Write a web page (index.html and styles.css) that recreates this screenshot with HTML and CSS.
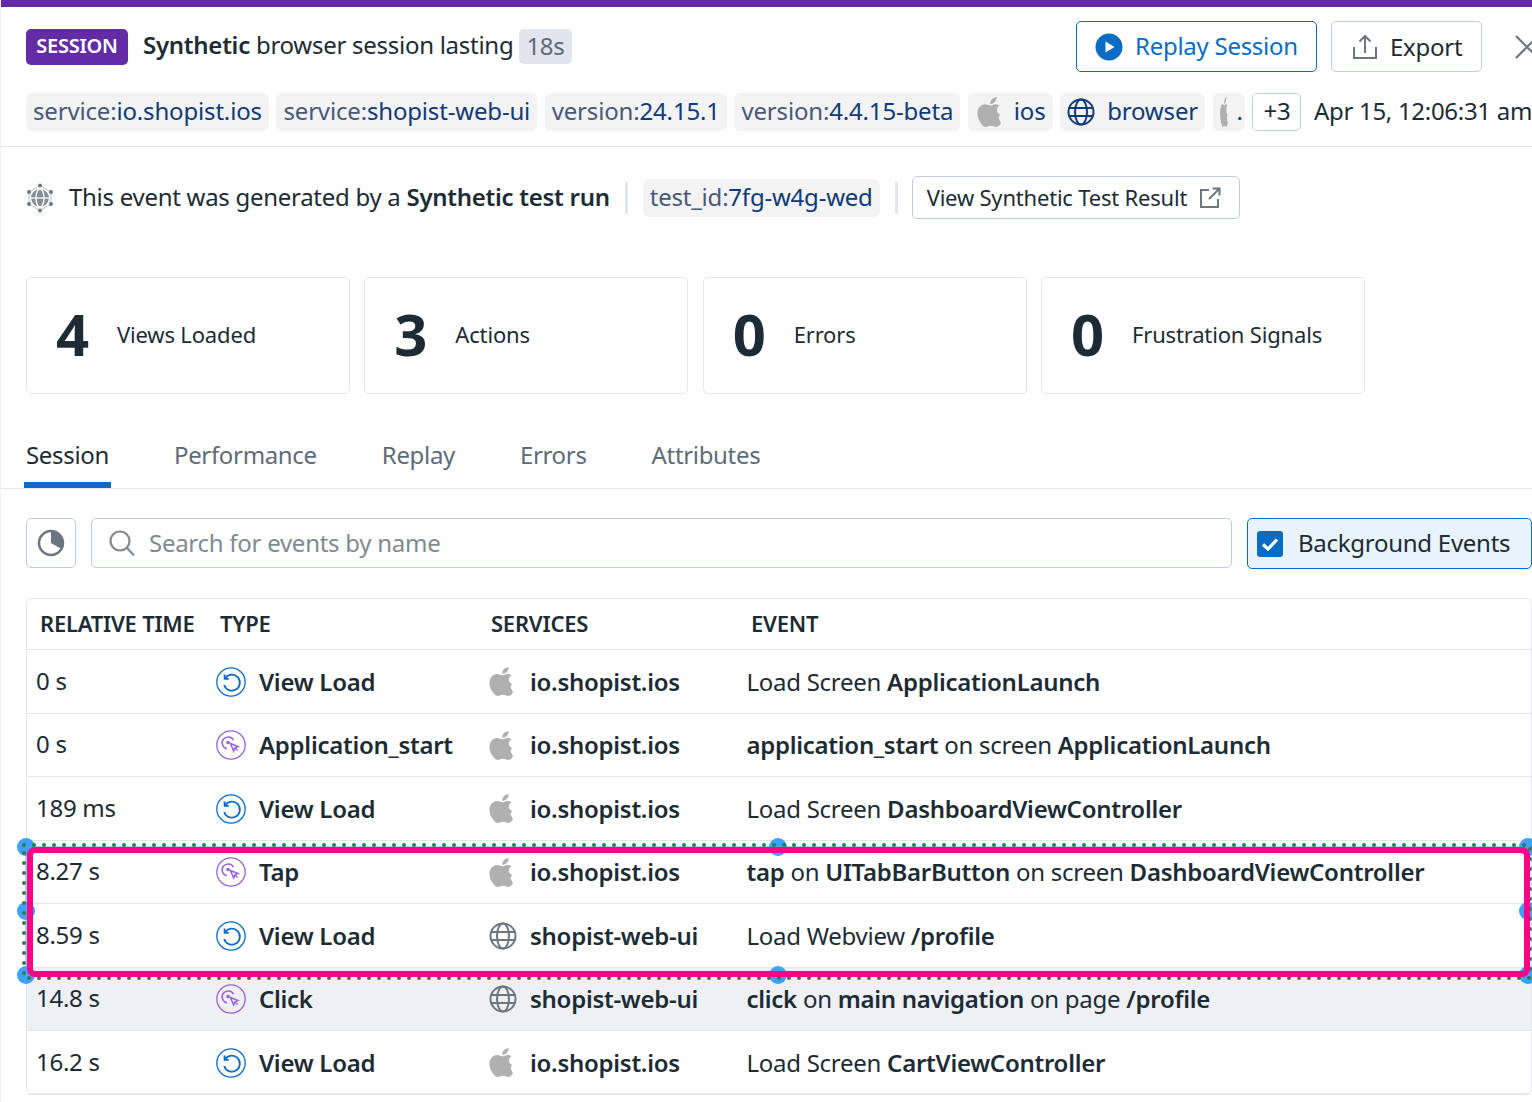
FILE: index.html
```html
<!DOCTYPE html>
<html lang="en">
<head>
    <meta charset="UTF-8" />
    <title>Session</title>
    <link rel="stylesheet" href="styles.css">
</head>
<body>
    <svg class="defs" width="0" height="0">
        <symbol id="apple" viewBox="3.600 2 15.700 20" preserveAspectRatio="none"><path fill="#b0b0b0" d="M18.710 19.500c-.83 1.240-1.710 2.450-3.050 2.470-1.340.03-1.770-.79-3.290-.79-1.530 0-2 .77-3.270.82-1.310.05-2.300-1.320-3.140-2.530C4.250 17 2.940 12.450 4.700 9.390c.87-1.520 2.430-2.480 4.120-2.510 1.280-.02 2.500.87 3.290.87.78 0 2.260-1.070 3.210-.91.4.02 1.530.16 2.360 1.020-.08.05-1.610.94-1.590 2.800.02 2.220 1.950 2.960 1.970 2.970-.02.05-.31 1.060-1.020 2.080zM13 3.500c.73-.83 1.940-1.460 2.940-1.500.13 1.170-.34 2.350-1.040 3.190-.69.85-1.830 1.510-2.950 1.420-.15-1.150.41-2.350 1.050-3.110z"/></symbol>
        <symbol id="globe" viewBox="0 0 28 28"><g fill="none" stroke="currentColor" stroke-width="2"><circle cx="14" cy="14" r="12.500"/><ellipse cx="14" cy="14" rx="6" ry="12.500"/><path d="M2.500 10h23M2.500 18h23"/></g></symbol>
        <symbol id="view" viewBox="0 0 30 30"><g fill="none" stroke="#0b6cc4"><circle cx="15" cy="15" r="14.200" stroke-width="1.300"/><path stroke-width="1.800" d="M9.200 11.200A8 8 0 1 1 8.200 18"/><path stroke-width="1.800" d="M8.600 7.600v4.200h4.200"/></g></symbol>
        <symbol id="action" viewBox="0 0 30 30"><g fill="none" stroke="#9a62d8"><circle cx="15" cy="15" r="14.200" stroke-width="1.300"/><path stroke-width="1.500" d="M17.500 10.200A6 6 0 1 0 11 18.800"/><path stroke-width="1.500" d="M14.500 13.500l7.500 3-3 1.300-1.300 3.200z"/><path stroke-width="1.500" d="M19 18l2.500 2.500"/></g><circle cx="12" cy="12.600" r="1.800" fill="#9a62d8"/></symbol>
    </svg>

    <div class="topbar"></div>

    <header class="head">
        <span class="badge">SESSION</span>
        <span class="title"><b>Synthetic</b> browser session lasting</span>
        <span class="chip">18s</span>
        <div class="actions">
            <button class="btn btn-replay">
                <svg width="28" height="28" viewBox="0 0 28 28"><circle cx="14" cy="14" r="13.500" fill="#0b6cc4"/><path d="M10.500 8.500v11l9-5.500z" fill="#fff"/></svg>
                <span class="up">Replay Session</span>
            </button>
            <button class="btn btn-export">
                <svg width="26" height="28" viewBox="0 0 26 28" fill="none" stroke="#6c7680" stroke-width="2"><path d="M2 14v11h22V14"/><path d="M13 20V3M7.500 8.500L13 3l5.500 5.500"/></svg>
                Export
            </button>
            <svg class="close" width="17" height="26" viewBox="0 0 17 26" fill="none" stroke="#6c7680" stroke-width="2.200"><path d="M1 2l22 22M23 2L1 24"/></svg>
        </div>
    </header>

    <div class="tags">
        <span class="tag">service:<em>io.shopist.ios</em></span>
        <span class="tag">service:<em>shopist-web-ui</em></span>
        <span class="tag">version:<em>24.15.1</em></span>
        <span class="tag">version:<em>4.4.15-beta</em></span>
        <span class="tag tag-apple"><svg width="25" height="30"><use href="#apple"/></svg><em>ios</em></span>
        <span class="tag tag-icon"><svg class="navy" width="28" height="28"><use href="#globe"/></svg><em>browser</em></span>
        <span class="tag tag-cut"><svg width="8" height="30"><use href="#apple"/></svg><em>.</em></span>
        <span class="more">+3</span>
        <span class="date">Apr 15, 12:06:31 am</span>
    </div>

    <section class="synth">
        <svg class="synth-icon" width="28" height="30" viewBox="0 0 28 30">
            <path d="M14 2.500L25 9v12l-11 6.500L3 21V9z" fill="none" stroke="#c4c9ce" stroke-width="1.200"/>
            <g fill="#6c7680"><circle cx="14" cy="2.500" r="2"/><circle cx="14" cy="27.500" r="2"/><circle cx="3" cy="9" r="2"/><circle cx="25" cy="9" r="2"/><circle cx="3" cy="21" r="2"/><circle cx="25" cy="21" r="2"/></g>
            <circle cx="14" cy="15" r="9" fill="#858d94"/>
            <g fill="none" stroke="#fff" stroke-width="1.300"><ellipse cx="14" cy="15" rx="4" ry="9"/><path d="M5 15h18"/></g>
        </svg>
        <span class="synth-text">This event was generated by a <b>Synthetic test run</b></span>
        <span class="sep"></span>
        <span class="tag">test_id:<em>7fg-w4g-wed</em></span>
        <span class="sep"></span>
        <button class="btn btn-result">
            <span class="up">View Synthetic Test Result</span>
            <svg width="22" height="22" viewBox="0 0 22 22" fill="none" stroke="#6c7680" stroke-width="2"><path d="M10 3H2v17h17v-8"/><path d="M10 12L20 2M13.500 1.500H20.500V8.500"/></svg>
        </button>
    </section>

    <section class="stats">
        <div class="stat"><strong>4</strong><span>Views Loaded</span></div>
        <div class="stat"><strong>3</strong><span>Actions</span></div>
        <div class="stat"><strong>0</strong><span>Errors</span></div>
        <div class="stat"><strong>0</strong><span>Frustration Signals</span></div>
    </section>

    <nav class="tabs">
        <a class="active">Session</a>
        <a>Performance</a>
        <a>Replay</a>
        <a>Errors</a>
        <a>Attributes</a>
    </nav>

    <div class="toolbar">
        <button class="pie">
            <svg width="28" height="28" viewBox="0 0 28 28"><circle cx="14" cy="14" r="12" fill="none" stroke="#6c7680" stroke-width="2.500"/><path d="M14 14V2a12 12 0 0 1 10.400 18z" fill="#6c7680"/></svg>
        </button>
        <div class="search">
            <svg width="28" height="28" viewBox="0 0 28 28" fill="none" stroke="#7f8a91" stroke-width="2.200"><circle cx="12" cy="12" r="9.500"/><path d="M19 19l7 7.500"/></svg>
            <span>Search for events by name</span>
        </div>
        <label class="bg-events">
            <svg width="26" height="26" viewBox="0 0 26 26"><rect width="26" height="26" rx="3" fill="#0b6cc4"/><path d="M6 13.500l5 4.500 9-9.500" fill="none" stroke="#fff" stroke-width="3.200"/></svg>
            <span class="up">Background Events</span>
        </label>
    </div>

    <div class="table">
        <div class="row row-head">
            <span>RELATIVE TIME</span><span>TYPE</span><span>SERVICES</span><span>EVENT</span>
        </div>
        <div class="row">
            <span>0 s</span>
            <span class="cell"><svg width="30" height="30"><use href="#view"/></svg><b>View Load</b></span>
            <span class="cell"><svg class="apple" width="25" height="29"><use href="#apple"/></svg><b>io.shopist.ios</b></span>
            <span>Load Screen <b>ApplicationLaunch</b></span>
        </div>
        <div class="row">
            <span>0 s</span>
            <span class="cell"><svg width="30" height="30"><use href="#action"/></svg><b>Application_start</b></span>
            <span class="cell"><svg class="apple" width="25" height="29"><use href="#apple"/></svg><b>io.shopist.ios</b></span>
            <span><b>application_start</b> on screen <b>ApplicationLaunch</b></span>
        </div>
        <div class="row">
            <span>189 ms</span>
            <span class="cell"><svg width="30" height="30"><use href="#view"/></svg><b>View Load</b></span>
            <span class="cell"><svg class="apple" width="25" height="29"><use href="#apple"/></svg><b>io.shopist.ios</b></span>
            <span>Load Screen <b>DashboardViewController</b></span>
        </div>
        <div class="row">
            <span>8.27 s</span>
            <span class="cell"><svg width="30" height="30"><use href="#action"/></svg><b>Tap</b></span>
            <span class="cell"><svg class="apple" width="25" height="29"><use href="#apple"/></svg><b>io.shopist.ios</b></span>
            <span><b>tap</b> on <b>UITabBarButton</b> on screen <b>DashboardViewController</b></span>
        </div>
        <div class="row">
            <span>8.59 s</span>
            <span class="cell"><svg width="30" height="30"><use href="#view"/></svg><b>View Load</b></span>
            <span class="cell"><svg class="grey" width="28" height="28"><use href="#globe"/></svg><b>shopist-web-ui</b></span>
            <span>Load Webview <b>/profile</b></span>
        </div>
        <div class="row row-hover">
            <span>14.8 s</span>
            <span class="cell"><svg width="30" height="30"><use href="#action"/></svg><b>Click</b></span>
            <span class="cell"><svg class="grey" width="28" height="28"><use href="#globe"/></svg><b>shopist-web-ui</b></span>
            <span><b>click</b> on <b>main navigation</b> on page <b>/profile</b></span>
        </div>
        <div class="row">
            <span>16.2 s</span>
            <span class="cell"><svg width="30" height="30"><use href="#view"/></svg><b>View Load</b></span>
            <span class="cell"><svg class="apple" width="25" height="29"><use href="#apple"/></svg><b>io.shopist.ios</b></span>
            <span>Load Screen <b>CartViewController</b></span>
        </div>

        <!-- annotation drawn over rows 4 and 5 -->
        <div class="selection">
            <i class="handle h-tl"></i><i class="handle h-tm"></i><i class="handle h-tr"></i>
            <i class="handle h-ml"></i><i class="handle h-mr"></i>
            <i class="handle h-bl"></i><i class="handle h-bm"></i><i class="handle h-br"></i>
            <svg class="dots" width="1506" height="133"><rect x="2" y="2" width="1503" height="129" fill="none" stroke="#4da6f5" stroke-width="1"/><rect x="0" y="0" width="1506" height="133" fill="none" stroke="#2f7d45" stroke-width="4" stroke-linecap="round" stroke-dasharray="0 10"/></svg>
            <div class="pink"></div>
        </div>
    </div>
</body>
</html>
```

FILE: styles.css
```css
* {
    box-sizing: border-box;
}

html, body {
    height: 1102px;
    overflow: hidden;
}

body {
    margin: 0;
    width: 1532px;
    background: #fff;
    color: #1c2b34;
    font-family: "Noto Sans", Arial, sans-serif;
    font-size: 24px;
    line-height: 32px;
    letter-spacing: -0.27px;
    border-left: 1px solid #f1f2f7;
}

b {
    font-weight: 600;
}

em {
    font-style: normal;
    color: #0f3a78;
}

.defs {
    position: absolute;
}

.up {
    padding-bottom: 2px;
}

.topbar {
    height: 7px;
    margin-left: -1px;
    background: #632ca6;
}

.head {
    display: flex;
    align-items: center;
    height: 78px;
    padding: 0 0 0 25px;
    white-space: nowrap;
}

.badge {
    width: 102px;
    height: 36px;
    margin-top: 1px;
    background: #632ca6;
    color: #fff;
    border-radius: 5px;
    font-size: 20px;
    line-height: 34px;
    font-weight: 600;
    text-align: center;
}

.title {
    margin-left: 15px;
    padding-bottom: 2px;
}

.chip {
    margin-left: 6px;
    padding: 0 7px;
    height: 35px;
    line-height: 33px;
    background: #e2e5ed;
    color: #5d6b78;
    border-radius: 5px;
}

.actions {
    display: flex;
    align-items: center;
    margin-left: auto;
    gap: 14px;
    margin-top: 1px;
}

.btn {
    display: flex;
    align-items: center;
    font: inherit;
    letter-spacing: inherit;
    background: #fff;
    border: 1px solid #c3cbe0;
    border-radius: 5px;
    color: inherit;
    white-space: nowrap;
}

.btn-replay {
    width: 241px;
    height: 51px;
    padding: 0 0 0 18px;
    gap: 12px;
    color: #0b6cc4;
    border-color: #0b6cc4;
}

.btn-export {
    width: 151px;
    height: 51px;
    padding: 0 0 0 20px;
    gap: 12px;
}

.close {
    margin-left: 19px;
    flex: none;
}

.tags {
    display: flex;
    align-items: center;
    gap: 7.600px;
    height: 62px;
    margin-left: -1px;
    padding: 8px 0 15px 26px;
    white-space: nowrap;
    border-bottom: 1px solid #e3e5ef;
}

.tag {
    display: inline-flex;
    align-items: center;
    height: 38px;
    padding: 0 7px 2px;
    background: #f3f3f4;
    border-radius: 6px;
    color: #49597a;
    letter-spacing: -0.17px;
    flex: none;
}

.tag svg {
    flex: none;
    margin-top: 2px;
}

.tag-icon {
    gap: 12px;
}

.tag-apple {
    padding-left: 9px;
    gap: 12px;
}

.tag-cut {
    padding-right: 2px;
    gap: 9px;
}

.navy {
    color: #0f3a78;
}

.grey {
    color: #6c7680;
}

.more {
    height: 38px;
    padding: 0 10px;
    line-height: 34px;
    border: 1px solid #c3cbe0;
    border-radius: 5px;
    flex: none;
}

.date {
    margin-left: 5px;
    padding-bottom: 2px;
    letter-spacing: -0.3px;
    flex: none;
}

.synth {
    display: flex;
    align-items: center;
    height: 43px;
    margin-top: 29px;
    padding-left: 25px;
    white-space: nowrap;
}

.synth-icon {
    flex: none;
    margin-right: 15px;
}

.synth-text {
    padding-bottom: 2px;
    letter-spacing: -0.28px;
}

.sep {
    width: 3px;
    height: 32px;
    background: #e3e5ef;
    margin: 0 15px;
}

.synth .tag {
    letter-spacing: -0.22px;
}

.btn-result {
    height: 43px;
    width: 328px;
    margin-left: -1px;
    padding: 0 0 0 14px;
    gap: 12px;
    font-size: 22px;
    letter-spacing: -0.2px;
}

.btn-result svg {
    flex: none;
}

.stats {
    display: flex;
    gap: 14.330px;
    margin-top: 58px;
    padding-left: 25px;
}

.stat {
    display: flex;
    align-items: center;
    width: 324px;
    height: 117px;
    padding-left: 29px;
    border: 1px solid #e5e7f0;
    border-radius: 5px;
    font-size: 22px;
    letter-spacing: -0.17px;
}

.stat span {
    padding-bottom: 4px;
}

.stat strong {
    width: 61px;
    margin-top: -3px;
    font-size: 58px;
    font-weight: 700;
    line-height: 70px;
}

.tabs {
    display: flex;
    gap: 65px;
    height: 95px;
    margin-left: -1px;
    padding: 45px 0 0 26px;
    border-bottom: 1px solid #e3e5ef;
    color: #5d6b78;
    letter-spacing: -0.33px;
}

.tabs a {
    position: relative;
    height: 49px;
}

.tabs .active {
    color: #1c2b34;
}

.tabs .active::after {
    content: "";
    position: absolute;
    left: -2px;
    right: -2px;
    bottom: 0;
    height: 6px;
    background: #0b6cc4;
}

.toolbar {
    display: flex;
    gap: 15px;
    margin-top: 29px;
    padding-left: 25px;
}

.pie {
    display: flex;
    align-items: center;
    justify-content: center;
    width: 50px;
    height: 50px;
    padding: 0;
    background: #fff;
    border: 1px solid #c3cbe0;
    border-radius: 5px;
}

.search {
    display: flex;
    align-items: center;
    gap: 13px;
    width: 1141px;
    height: 50px;
    padding-left: 16px;
    border: 1px solid #c3cbe0;
    border-radius: 5px;
    color: #7f8a91;
}

.bg-events {
    display: flex;
    align-items: center;
    gap: 15px;
    width: 285px;
    height: 51px;
    padding-left: 9px;
    background: #e9f3fb;
    border: 1px solid #0b6cc4;
    border-radius: 5px;
}

.table {
    position: relative;
    width: 1506px;
    height: 496px;
    margin: 29px 0 0 25px;
    border: 1px solid #e3e5ef;
    border-radius: 6px;
}

.row {
    display: grid;
    grid-template-columns: 189px 273px 257.500px 1fr;
    align-items: center;
    height: 63.500px;
    padding-top: 1px;
    border-bottom: 1px solid #e3e5ef;
    white-space: nowrap;
}

.row > span:first-child {
    padding: 0 0 2px 9px;
}

.row-head {
    grid-template-columns: 193px 271px 260px 1fr;
    height: 51px;
    padding: 0 0 3px;
    font-size: 22px;
    font-weight: 600;
    letter-spacing: -0.23px;
}

.row-head > span:first-child {
    padding: 0 0 0 13px;
}

.row-hover {
    background: #eff0f4;
}

.cell {
    display: flex;
    align-items: center;
    gap: 13px;
}

.cell svg {
    flex: none;
}

.cell .apple {
    margin-right: 3px;
}

.selection {
    position: absolute;
    left: -3px;
    top: 246px;
    width: 1506px;
    height: 133px;
}

.dots {
    position: absolute;
    left: 0;
    top: 0;
    overflow: visible;
}

.pink {
    position: absolute;
    left: 3px;
    top: 2px;
    width: 1503px;
    height: 130px;
    border: 6px solid #ff0088;
    border-radius: 8px;
}

.handle {
    position: absolute;
    width: 18px;
    height: 18px;
    margin: -9px 0 0 -9px;
    border-radius: 50%;
    background: #3ea0ff;
}

.h-tl { left: 2px; top: 2px; }
.h-tm { left: 754px; top: 2px; }
.h-tr { left: 1504px; top: 2px; }
.h-ml { left: 2px; top: 66px; }
.h-mr { left: 1504px; top: 66px; }
.h-bl { left: 2px; top: 130px; }
.h-bm { left: 754px; top: 130px; }
.h-br { left: 1504px; top: 130px; }
```
